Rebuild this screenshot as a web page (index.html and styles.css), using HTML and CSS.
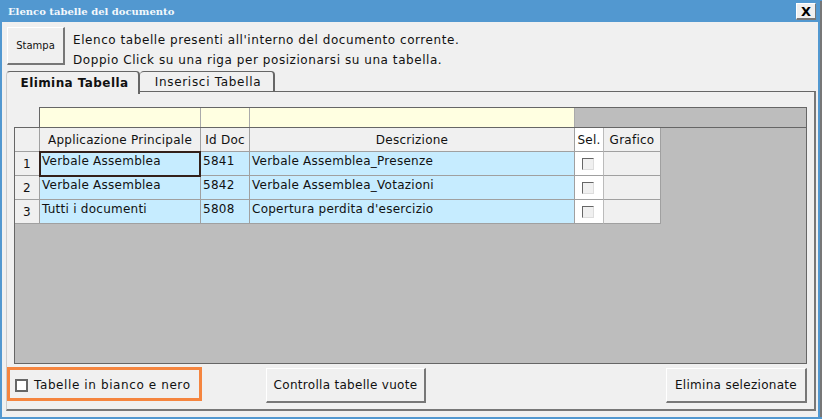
FILE: index.html
```html
<!DOCTYPE html>
<html lang="en">
<head>
  <meta charset="UTF-8" />
  <title>Elenco tabelle del documento</title>
  <link rel="stylesheet" href="styles.css">
</head>
<body>
  <div class="window">
    <div class="titlebar">
      <span class="title">Elenco tabelle del documento</span>
      <button class="close">X</button>
    </div>
    <div class="content">
      <div class="top-row">
        <button class="btn stampa">Stampa</button>
        <div class="intro">
          <div>Elenco tabelle presenti all'interno del documento corrente.</div>
          <div>Doppio Click su una riga per posizionarsi su una tabella.</div>
        </div>
      </div>
      <div class="tabs">
        <div class="tab active">Elimina Tabella</div>
        <div class="tab">Inserisci Tabella</div>
      </div>
      <div class="panel">
        <div class="sheet">
          <div class="filter-row">
            <div class="filter col-app"></div>
            <div class="filter col-id"></div>
            <div class="filter col-desc"></div>
          </div>
          <div class="sheet-body">
            <div class="row head">
              <div class="cell col-num"></div>
              <div class="cell col-app center">Applicazione Principale</div>
              <div class="cell col-id center">Id Doc</div>
              <div class="cell col-desc center">Descrizione</div>
              <div class="cell col-sel center">Sel.</div>
              <div class="cell col-graf center">Grafico</div>
            </div>
            <div class="row">
              <div class="cell col-num num">1</div>
              <div class="cell col-app data selected">Verbale Assemblea</div>
              <div class="cell col-id data">5841</div>
              <div class="cell col-desc data">Verbale Assemblea_Presenze</div>
              <div class="cell col-sel check"><span class="box"></span></div>
              <div class="cell col-graf"></div>
            </div>
            <div class="row">
              <div class="cell col-num num">2</div>
              <div class="cell col-app data">Verbale Assemblea</div>
              <div class="cell col-id data">5842</div>
              <div class="cell col-desc data">Verbale Assemblea_Votazioni</div>
              <div class="cell col-sel check"><span class="box"></span></div>
              <div class="cell col-graf"></div>
            </div>
            <div class="row">
              <div class="cell col-num num">3</div>
              <div class="cell col-app data">Tutti i documenti</div>
              <div class="cell col-id data">5808</div>
              <div class="cell col-desc data">Copertura perdita d'esercizio</div>
              <div class="cell col-sel check"><span class="box"></span></div>
              <div class="cell col-graf"></div>
            </div>
          </div>
        </div>
        <div class="bottom-row">
          <label class="bw-option"><span class="bw-box"></span>Tabelle in bianco e nero</label>
          <button class="btn wide">Controlla tabelle vuote</button>
          <button class="btn delete">Elimina selezionate</button>
        </div>
      </div>
    </div>
  </div>
</body>
</html>
```

FILE: styles.css
```css
html, body {
  margin: 0;
  height: 100%;
  overflow: hidden;
}
body {
  width: 822px;
  height: 419px;
  font-family: "DejaVu Sans", Verdana, sans-serif;
  font-size: 12px;
  letter-spacing: 0.25px;
  color: #111;
  background: #f0f0f0;
}
.window {
  box-sizing: border-box;
  width: 822px;
  height: 419px;
  background: #f0f0f0;
  border: 2px solid #5298d0;
  border-top-width: 1px;
  border-right: 0;
  box-shadow: inset -2px 0 0 #777, inset -4px 0 0 #5298d0;
}
.titlebar {
  height: 21px;
  margin-right: 2px;
  background: #5298d0;
  display: flex;
  align-items: center;
  justify-content: space-between;
  padding: 0 4px 0 6px;
}
.title {
  color: #f4f8fc;
  font-family: "DejaVu Serif", serif;
  font-size: 10px;
  font-weight: bold;
  letter-spacing: 0;
}
.close {
  width: 20px;
  height: 17px;
  padding: 0;
  background: #f0f0f0;
  border: 1px solid #fff;
  border-right-color: #777;
  border-bottom: 2px solid #777;
  font-family: "DejaVu Sans", sans-serif;
  font-size: 13px;
  font-weight: bold;
  line-height: 13px;
  color: #000;
}
.content {
  padding: 5px 6px 0 4px;
}
.top-row {
  display: flex;
  height: 38px;
  gap: 8px;
  margin-left: 1px;
}
.btn {
  padding: 0;
  background: #f0f0f0;
  border: 1px solid #fff;
  border-right: 2px solid #777;
  border-bottom: 2px solid #777;
  font-family: "DejaVu Sans", sans-serif;
  letter-spacing: 0.3px;
  color: #111;
  box-sizing: border-box;
}
.stampa {
  width: 58px;
  height: 38px;
  font-size: 10px;
  letter-spacing: 0;
}
.intro {
  line-height: 20px;
  letter-spacing: 0.56px;
  margin-top: 3px;
}
.tabs {
  display: flex;
  height: 20px;
  margin-top: 6px;
}
.tab {
  box-sizing: border-box;
  height: 20px;
  padding: 3px 0 0 3px;
  width: 135px;
  text-align: center;
  border: 1px solid #666;
  border-bottom: 0;
  border-left: 0;
  border-right-width: 2px;
  border-radius: 4px 4px 0 0;
  background: #f0f0f0;
  letter-spacing: 0.7px;
}
.tab.active {
  width: 134px;
  height: 23px;
  z-index: 1;
  font-weight: bold;
  padding: 4px 0 0 4px;
  letter-spacing: 0.42px;
  border-left: 1px solid #ccc;
  white-space: nowrap;
}
.panel {
  box-sizing: border-box;
  height: 320px;
  border: 1px solid #ccc;
  border-top: 1px solid #666;
  border-right: 2px solid #777;
  border-bottom: 2px solid #777;
  padding: 15px 7px 0 7px;
}
.sheet {
  display: flex;
  flex-direction: column;
  height: 257px;
}
.filter-row {
  box-sizing: border-box;
  display: flex;
  height: 20px;
  margin-left: 25px;
  background: #bdbdbd;
  border: 1px solid #666;
  border-bottom: 0;
}
.sheet-body {
  flex: 1;
  background: #bdbdbd;
  border: 1px solid #666;
}
.row {
  display: flex;
  height: 24px;
}
.filter {
  box-sizing: border-box;
  background: #ffffe1;
  border-right: 1px solid #aaa;
}
.cell {
  box-sizing: border-box;
  height: 24px;
  background: #f0f0f0;
  border-right: 1px solid #a0a0a0;
  border-bottom: 1px solid #a0a0a0;
  white-space: nowrap;
}
.head .cell {
  line-height: 25px;
}
.center {
  text-align: center;
}
.col-num { width: 25px; }
.col-app { width: 161px; }
.col-id { width: 49px; }
.col-desc { width: 325px; }
.col-sel { width: 29px; background: #fff; border-right-color: #bbb; }
.col-graf { width: 57px; }
.num {
  text-align: center;
  padding: 5px 0 0 0;
  line-height: 14px;
}
.data {
  background: #c6ecff;
  padding: 1px 2px 0;
  line-height: 16px;
}
.selected {
  border: 2px solid #33201a;
  margin: -1px 0 -1px -1px;
  height: 26px;
  width: 162px;
  padding: 0 1px;
  z-index: 1;
}
.check {
  display: flex;
  align-items: center;
  justify-content: center;
}
.box {
  box-sizing: border-box;
  width: 12px;
  height: 12px;
  margin-right: 2px;
  background: #f0f0f0;
  border: 1px solid #ddd;
  border-top-color: #666;
  border-left-color: #666;
}
.bottom-row {
  display: flex;
  align-items: flex-start;
  height: 45px;
}
.bw-option {
  box-sizing: border-box;
  display: flex;
  align-items: center;
  width: 195px;
  height: 34px;
  margin-top: 3px;
  margin-left: -7px;
  border: 3px solid #f5853f;
  padding: 2px 0 0 5px;
  letter-spacing: 0.6px;
}
.bw-box {
  box-sizing: border-box;
  width: 13px;
  height: 13px;
  margin-right: 6px;
  background: #fff;
  border: 2px solid #666;
}
.wide {
  width: 160px;
  height: 35px;
  margin: 4px 0 0 64px;
  font-size: 12px;
}
.delete {
  width: 141px;
  height: 35px;
  margin: 4px 0 0 auto;
  font-size: 12px;
}
```
